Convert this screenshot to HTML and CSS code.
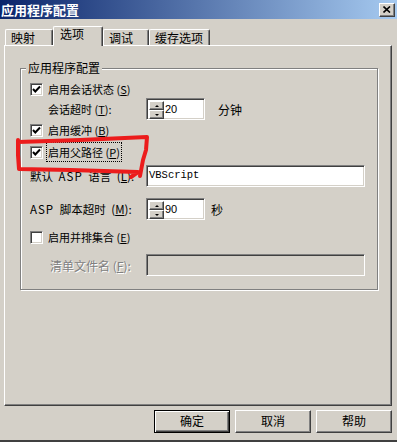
FILE: index.html
```html
<!DOCTYPE html>
<html lang="zh-CN">
<head>
    <meta charset="UTF-8">
    <title>应用程序配置</title>
    <link rel="stylesheet" href="styles.css">
</head>
<body>
    <div class="window">
        <div class="titlebar">
            <span class="title-text">应用程序配置</span>
            <span class="close-btn">
                <svg width="8" height="7" viewBox="0 0 8 7"><path d="M0.5 0.5 L7 6.5 M7 0.5 L0.5 6.5" stroke="#000" stroke-width="1.6" fill="none"/></svg>
            </span>
        </div>

        <div class="tabs">
            <div class="tab tab-map">映射</div>
            <div class="tab tab-opt active">选项</div>
            <div class="tab tab-dbg">调试</div>
            <div class="tab tab-cache">缓存选项</div>
        </div>

        <div class="panel">
            <div class="group">
                <div class="group-title">应用程序配置</div>

                <div class="row check r1">
                    <span class="checkbox checked"><svg width="11" height="11" viewBox="0 0 11 11"><path d="M2 5 L4.3 7.5 L9 2.5" stroke="#000" stroke-width="2" fill="none"/></svg></span>
                    <span>启用会话状态 (<u>S</u>)</span>
                </div>
                <div class="row field r2">
                    <span class="field-label indent">会话超时 (<u>T</u>):</span>
                    <span class="spin">
                        <span class="spin-btns">
                            <span class="spin-btn"><i class="arrow up"></i></span>
                            <span class="spin-btn"><i class="arrow down"></i></span>
                        </span>
                        <span class="spin-value">20</span>
                    </span>
                    <span class="unit unit-min">分钟</span>
                </div>
                <div class="row check r3">
                    <span class="checkbox checked"><svg width="11" height="11" viewBox="0 0 11 11"><path d="M2 5 L4.3 7.5 L9 2.5" stroke="#000" stroke-width="2" fill="none"/></svg></span>
                    <span>启用缓冲 (<u>B</u>)</span>
                </div>
                <div class="row check r4">
                    <span class="checkbox checked"><svg width="11" height="11" viewBox="0 0 11 11"><path d="M2 5 L4.3 7.5 L9 2.5" stroke="#000" stroke-width="2" fill="none"/></svg></span>
                    <span class="focused">启用父路径 (<u>P</u>)</span>
                </div>
                <div class="row field r5">
                    <span class="field-label spaced">默认 <span class="latin">ASP</span> 语言 (<u>L</u>):</span>
                    <span class="edit wide mono">VBScript</span>
                </div>
                <div class="row field r6">
                    <span class="field-label spaced"><span class="latin">ASP</span> 脚本超时 (<u>M</u>):</span>
                    <span class="spin">
                        <span class="spin-btns">
                            <span class="spin-btn"><i class="arrow up"></i></span>
                            <span class="spin-btn"><i class="arrow down"></i></span>
                        </span>
                        <span class="spin-value">90</span>
                    </span>
                    <span class="unit unit-sec">秒</span>
                </div>
                <div class="row check r7">
                    <span class="checkbox"></span>
                    <span>启用并排集合 (<u>E</u>)</span>
                </div>
                <div class="row field r8">
                    <span class="field-label indent-more disabled">清单文件名 (<u>F</u>):</span>
                    <span class="edit wide off"></span>
                </div>
            </div>
        </div>

        <div class="buttons">
            <span class="btn default">确定</span>
            <span class="btn">取消</span>
            <span class="btn">帮助</span>
        </div>

        <svg class="marker" width="397" height="442" viewBox="0 0 397 442">
            <path d="M18 142 L80 140 L147 137 L146 150 L143 160 L140 176 M18 140 L18 155 L19 169 L70 170 L138 172 L131 177"
                  stroke="#ec1c1c" stroke-width="4" fill="none" stroke-linecap="round" stroke-linejoin="round"/>
        </svg>
    </div>
</body>
</html>
```

FILE: styles.css
```css
body {
    margin: 0;
    font-family: "Noto Sans CJK SC", "Liberation Sans", sans-serif;
    font-size: 11px;
    color: #000;
}
.window {
    position: relative;
    width: 397px;
    height: 442px;
    background: #d4d0c8;
    box-sizing: border-box;
    border-bottom: 2px solid #404040;
    overflow: hidden;
}
.titlebar {
    height: 19px;
    display: flex;
    align-items: center;
    justify-content: space-between;
    padding: 0 2px 0 1px;
    background: linear-gradient(to right, #0a246a, #a6caf0);
}
.title-text {
    color: #fff;
    font-weight: bold;
    font-size: 13px;
    line-height: 15px;
}
.close-btn {
    width: 16px;
    height: 14px;
    box-sizing: border-box;
    display: flex;
    align-items: center;
    justify-content: center;
    background: #d4d0c8;
    border-top: 1px solid #fff;
    border-left: 1px solid #fff;
    border-right: 1px solid #404040;
    border-bottom: 1px solid #404040;
    box-shadow: inset -1px -1px 0 #808080;
}
.tabs {
    display: flex;
    align-items: flex-end;
    height: 19px;
    margin: 7px 0 0 5px;
}
.tab {
    height: 16px;
    box-sizing: border-box;
    padding-left: 5px;
    font-size: 12px;
    line-height: 15px;
    border-top: 1px solid #fff;
    border-left: 1px solid #fff;
    border-right: 1px solid #404040;
    border-radius: 2px 2px 0 0;
    box-shadow: inset -1px 0 0 #808080;
}
.tab-map { width: 48px; }
.tab-opt { width: 50px; }
.tab-dbg { width: 46px; }
.tab-cache { width: 61px; }
.tab.active {
    position: relative;
    z-index: 1;
    height: 20px;
    margin-bottom: -1px;
    line-height: 14px;
    padding-left: 6px;
    background: #d4d0c8;
}
.panel {
    height: 361px;
    box-sizing: border-box;
    margin: 0 5px 0 4px;
    padding-top: 22px;
    border-top: 1px solid #fff;
    border-left: 1px solid #fff;
    border-right: 1px solid #404040;
    border-bottom: 1px solid #404040;
    box-shadow: inset -1px -1px 0 #808080;
}
.group {
    width: 358px;
    box-sizing: border-box;
    margin-left: 15px;
    padding: 0 0 13px 9px;
    border: 1px solid #808080;
    box-shadow: inset 1px 1px 0 #fff, 1px 1px 0 #fff;
}
.group-title {
    display: table;
    height: 14px;
    margin: -8px 0 0 -4px;
    padding: 0 2px;
    font-size: 12px;
    line-height: 14px;
    background: #d4d0c8;
}
.row {
    display: flex;
    align-items: center;
}
.row.check { height: 18px; }
.row.field { height: 22px; }
.r1 { margin-top: 5px; }
.r3 { margin-top: 1px; }
.r4 { margin-top: 4px; }
.r5 { margin-top: 4px; }
.r6 { margin-top: 11px; }
.r7 { margin-top: 8px; }
.r8 { margin-top: 8px; }
.checkbox {
    width: 13px;
    height: 13px;
    box-sizing: border-box;
    margin-right: 5px;
    display: flex;
    align-items: center;
    justify-content: center;
    background: #fff;
    border-top: 1px solid #808080;
    border-left: 1px solid #808080;
    border-right: 1px solid #fff;
    border-bottom: 1px solid #fff;
    box-shadow: inset 1px 1px 0 #404040, inset -1px -1px 0 #d4d0c8;
}
.focused {
    outline: 1px dotted #000;
    outline-offset: 1px;
}
.field-label {
    width: 116px;
    flex: none;
    box-sizing: border-box;
    white-space: nowrap;
}
.field-label.indent { padding-left: 18px; }
.field-label.indent-more {
    padding-left: 20px;
    font-size: 12px;
}
.spaced {
    font-size: 11.5px;
    word-spacing: 3px;
}
.latin {
    letter-spacing: 1px;
}
.disabled {
    color: #808080;
    text-shadow: 1px 1px 0 #fff;
}
.spin, .edit {
    height: 22px;
    box-sizing: border-box;
    background: #fff;
    border-top: 1px solid #808080;
    border-left: 1px solid #808080;
    border-right: 1px solid #fff;
    border-bottom: 1px solid #fff;
    box-shadow: inset 1px 1px 0 #404040, inset -1px -1px 0 #d4d0c8;
}
.spin {
    width: 59px;
    display: flex;
    padding: 2px 0 0 2px;
}
.spin-btns {
    display: flex;
    flex-direction: column;
    width: 15px;
}
.spin-btn {
    height: 9px;
    box-sizing: border-box;
    display: flex;
    align-items: center;
    justify-content: center;
    background: #d4d0c8;
    border-top: 1px solid #fff;
    border-left: 1px solid #fff;
    border-right: 1px solid #404040;
    border-bottom: 1px solid #404040;
    box-shadow: inset -1px -1px 0 #808080;
}
.arrow {
    width: 0;
    height: 0;
    border-left: 2px solid transparent;
    border-right: 2px solid transparent;
}
.arrow.up { border-bottom: 2px solid #000; }
.arrow.down { border-top: 2px solid #000; }
.spin-value {
    font-family: "Liberation Sans", sans-serif;
    font-size: 11px;
    line-height: 16px;
    padding-left: 1px;
}
.unit-min { margin-left: 13px; font-size: 12px; }
.unit-sec { margin-left: 6px; font-size: 12px; }
.edit.wide { width: 219px; }
.edit.off { background: #d4d0c8; }
.mono {
    font-family: "Liberation Mono", monospace;
    font-size: 10.5px;
    line-height: 19px;
    padding-left: 2px;
}
.buttons {
    display: flex;
    justify-content: flex-end;
    gap: 5px;
    margin: 4px 5px 0 0;
}
.btn {
    width: 76px;
    height: 23px;
    box-sizing: border-box;
    text-align: center;
    font-size: 12px;
    line-height: 20px;
    border-top: 1px solid #fff;
    border-left: 1px solid #fff;
    border-right: 1px solid #404040;
    border-bottom: 1px solid #404040;
    box-shadow: inset -1px -1px 0 #808080;
}
.btn.default {
    border: 1px solid #000;
    box-shadow: inset 1px 1px 0 #fff, inset -1px -1px 0 #404040, inset -2px -2px 0 #808080;
}
.marker {
    position: absolute;
    top: 0;
    left: 0;
    pointer-events: none;
}
```
